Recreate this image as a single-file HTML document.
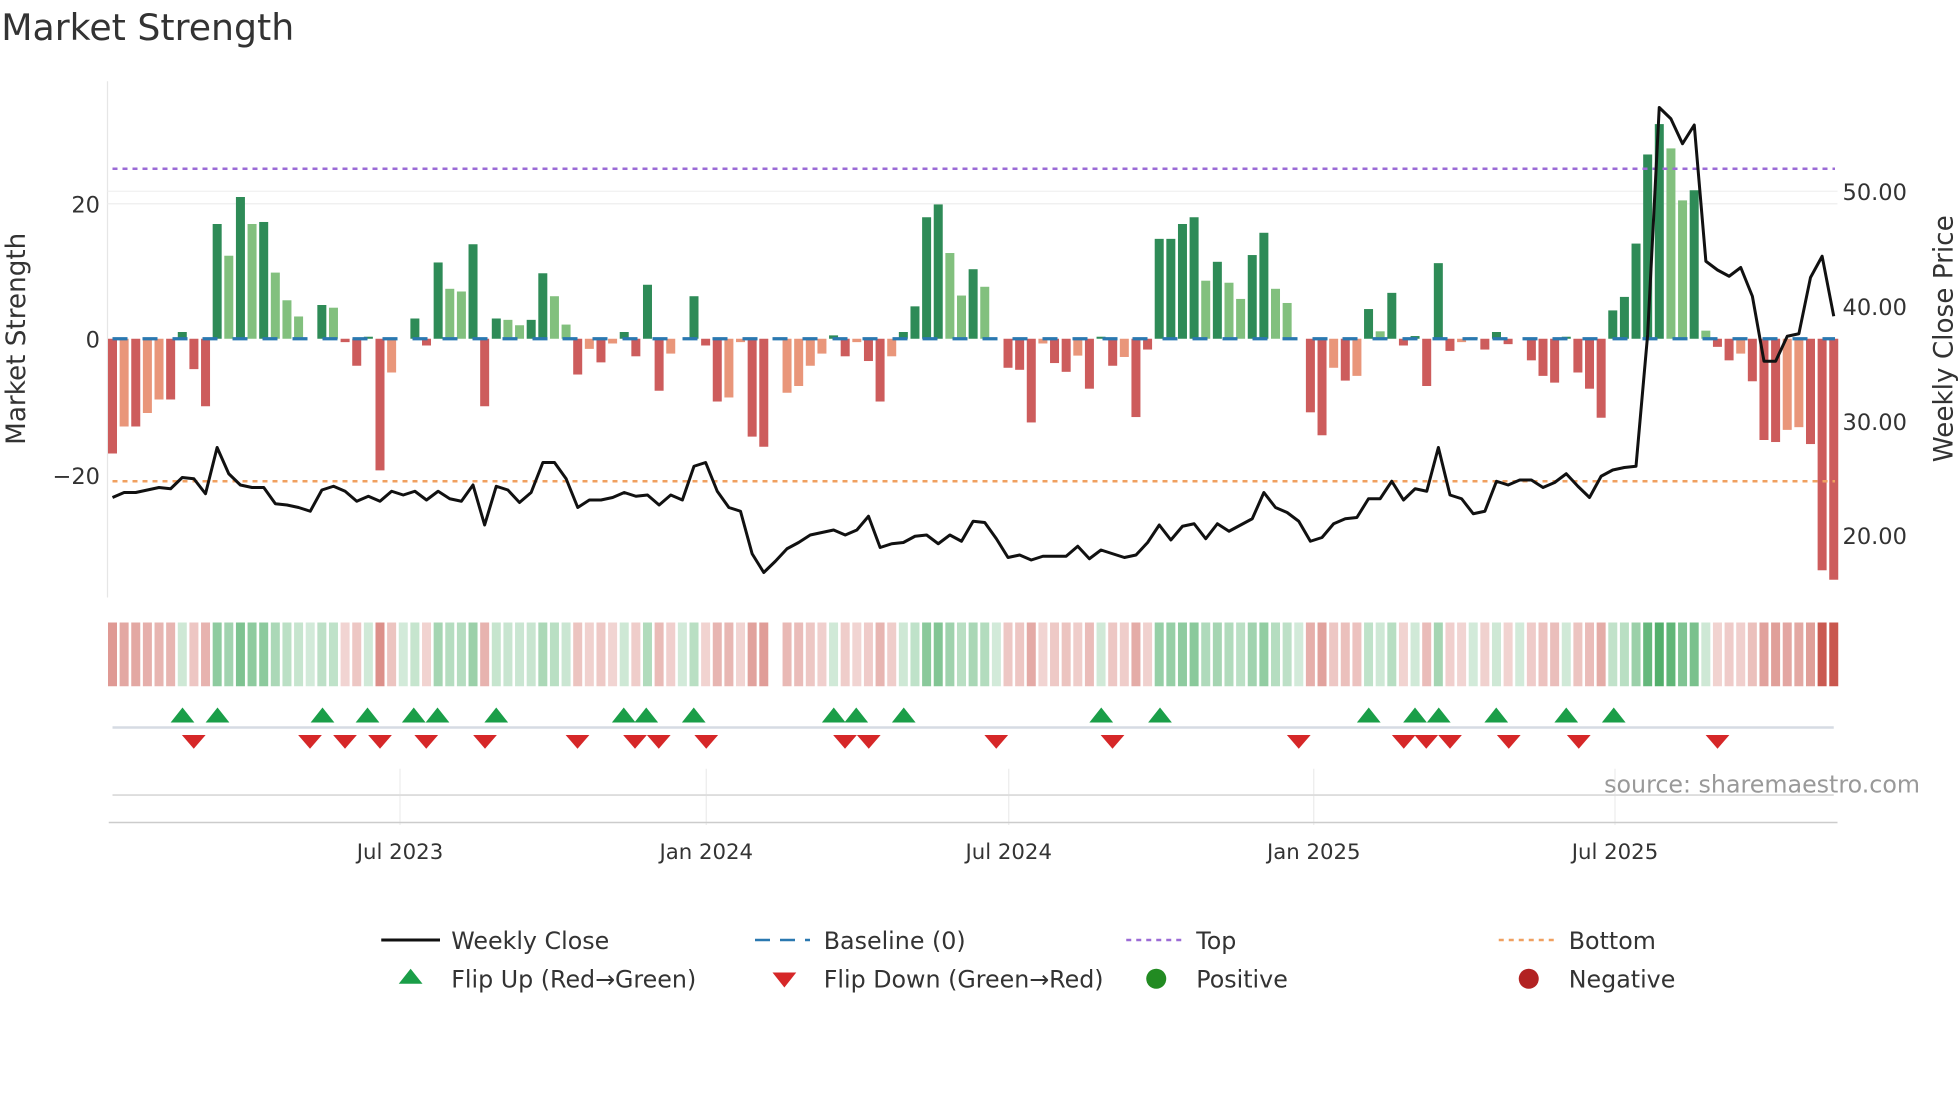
<!DOCTYPE html>
<html><head><meta charset="utf-8"><style>
html,body{margin:0;padding:0;background:#fff;}
svg{display:block;font-family:"DejaVu Sans","Liberation Sans",sans-serif;}
</style></head><body>
<svg id="c" width="1960" height="1102" viewBox="0 0 1568 881.6" xmlns="http://www.w3.org/2000/svg">
<rect width="1568" height="882" fill="#fff"/>
<text x="1" y="32" font-size="29" fill="#333">Market Strength</text>
<line x1="86" y1="65" x2="86" y2="478" stroke="#e6e6e6"/>
<line x1="86" y1="163" x2="1470" y2="163" stroke="#eeeeee"/>
<line x1="86" y1="153" x2="1470" y2="153" stroke="#f0f0f0"/>
<text x="80" y="170" font-size="18" fill="#333" text-anchor="end">20</text>
<text x="80" y="278" font-size="18" fill="#333" text-anchor="end">0</text>
<text x="80" y="387" font-size="18" fill="#333" text-anchor="end">−20</text>
<text x="1474" y="160" font-size="18" fill="#333">50.00</text>
<text x="1474" y="252" font-size="18" fill="#333">40.00</text>
<text x="1474" y="344" font-size="18" fill="#333">30.00</text>
<text x="1474" y="435" font-size="18" fill="#333">20.00</text>
<text transform="translate(20,271) rotate(-90)" font-size="21" fill="#333" text-anchor="middle">Market Strength</text>
<text transform="translate(1562,271) rotate(-90)" font-size="21" fill="#333" text-anchor="middle">Weekly Close Price</text>
<g id="bars"></g>
<line x1="90" y1="135" x2="1468" y2="135" stroke="#9b6bd6" stroke-width="2" stroke-dasharray="4 4"/>
<line x1="90" y1="385" x2="1468" y2="385" stroke="#f0a060" stroke-width="2" stroke-dasharray="4 4"/>
<line x1="90" y1="271" x2="1468" y2="271" stroke="#2a78b0" stroke-width="2.6" stroke-dasharray="12 12"/>
<polyline id="price" fill="none" stroke="#111" stroke-width="2.4" stroke-linejoin="round"/>
<g id="heat"></g>
<g stroke="#ececec">
<line x1="320" y1="615" x2="320" y2="660"/><line x1="565" y1="615" x2="565" y2="660"/><line x1="807" y1="615" x2="807" y2="660"/><line x1="1051" y1="615" x2="1051" y2="660"/><line x1="1292" y1="615" x2="1292" y2="660"/>
</g>
<line x1="90" y1="582" x2="1467" y2="582" stroke="#d6dbe3" stroke-width="2"/>
<line x1="90" y1="636" x2="1467" y2="636" stroke="#dddddd" stroke-width="1.5"/>
<line x1="87" y1="658" x2="1470" y2="658" stroke="#cccccc" stroke-width="1.2"/>
<g id="mk"></g>
<text x="1536" y="634" font-size="19" fill="#999" text-anchor="end">source: sharemaestro.com</text>
<g font-size="17" fill="#333" text-anchor="middle">
<text x="320" y="687">Jul 2023</text><text x="565" y="687">Jan 2024</text><text x="807" y="687">Jul 2024</text><text x="1051" y="687">Jan 2025</text><text x="1292" y="687">Jul 2025</text>
</g>
<g font-size="19" fill="#333">
<line x1="305" y1="752" x2="352" y2="752" stroke="#111" stroke-width="2.4"/>
<text x="361" y="759">Weekly Close</text>
<line x1="604" y1="752" x2="648" y2="752" stroke="#2a78b0" stroke-width="2" stroke-dasharray="12 8"/>
<text x="659" y="759">Baseline (0)</text>
<line x1="901" y1="752" x2="945" y2="752" stroke="#9b6bd6" stroke-width="2" stroke-dasharray="4 4"/>
<text x="957" y="759">Top</text>
<line x1="1199" y1="752" x2="1243" y2="752" stroke="#f0a060" stroke-width="2" stroke-dasharray="4 4"/>
<text x="1255" y="759">Bottom</text>
<polygon points="319,787 338,787 328.5,775" fill="#1a9e48"/>
<text x="361" y="790">Flip Up (Red→Green)</text>
<polygon points="618,778 637,778 627.5,790" fill="#d62728"/>
<text x="659" y="790">Flip Down (Green→Red)</text>
<circle cx="925" cy="783" r="8" fill="#228b22"/>
<text x="957" y="790">Positive</text>
<circle cx="1223" cy="783" r="8" fill="#b22222"/>
<text x="1255" y="790">Negative</text>
</g>
</svg>
<script>
var NS="http://www.w3.org/2000/svg";
var v=[-17,-13,-13,-11,-9,-9,1,-4.5,-10,17,12.3,21,17,17.3,9.8,5.7,3.3,0,5,4.6,-0.5,-4,0.3,-19.5,-5,0,3,-1,11.3,7.4,7,14,-10,3,2.8,2,2.8,9.7,6.3,2.1,-5.3,-1.5,-3.5,-0.7,1,-2.6,8,-7.7,-2.2,0,6.3,-1,-9.3,-8.7,-0.5,-14.5,-16,null,-8,-7,-4,-2.2,0.5,-2.6,-0.5,-3.3,-9.3,-2.6,1,4.8,18,19.9,12.7,6.4,10.3,7.7,0,-4.3,-4.6,-12.4,-0.7,-3.6,-4.9,-2.5,-7.4,0.3,-4,-2.7,-11.6,-1.6,14.8,14.8,17,18,8.6,11.4,8.3,5.9,12.4,15.7,7.4,5.3,0,-10.9,-14.3,-4.3,-6.2,-5.5,4.4,1.1,6.8,-1,0.4,-7,11.2,-1.8,-0.5,0.2,-1.6,1,-0.8,0,-3.2,-5.5,-6.5,0.3,-5,-7.4,-11.7,4.2,6.2,14.1,27.3,31.8,28.2,20.5,22,1.2,-1.2,-3.2,-2.2,-6.3,-15,-15.3,-13.5,-13.1,-15.6,-34.3,-35.7];
var t="RSRSSRDRRDLDLDLLLDDLRRDRSDDRDLLDRDLLDDLLRSRSDRDRSDDRRSSRRXSSSSDRSRRSDDDDLLDLDRRRSRRSRDRSRRDDDDLDLLDDLLDRRSRSDLDRDRDRSDRDRDRRRDRRRDDDDDLLDLRRSRRRSSRRR";
var px=[398,394,394,392,390,391,382,383,395,358,379,388,390,390,403,404,406,409,392,389,393,401,397,401,393,396,393,400,393,399,401,388,420,389,392,402,394,370,370,383,406,400,400,398,394,397,396,404,396,400,373,370,393,406,409,443,458,449,439,434,428,426,424,428,424,413,438,435,434,429,428,435,428,433,417,418,431,446,444,448,445,445,445,437,447,440,443,446,444,434,420,432,421,419,431,419,425,420,415,394,406,410,417,433,430,419,415,414,399,399,385,400,391,393,358,396,399,411,409,385,388,384,384,390,386,379,389,398,381,376,374,373,268,86,95,115,100,209,216,221,214,237,289,289,269,267,222,205,253];
var n=v.length, x0=90, dx=(1467-90)/(n-1);
var col={D:"#2e8b57",L:"#82c07e",R:"#cd5c5c",S:"#e9967a"};
var bars=document.getElementById("bars"),heat=document.getElementById("heat"),pts=[];
for(var i=0;i<n;i++){
 var x=x0+i*dx;
 if(i<px.length)pts.push(x.toFixed(1)+","+px[i]);
 if(v[i]===null)continue;
 var y=271-v[i]*5.4, ty=t[i]||"R";
 if(Math.abs(v[i])>0.05){
  var r=document.createElementNS(NS,"rect");
  r.setAttribute("x",x-3.6);r.setAttribute("width",7.2);
  r.setAttribute("y",Math.min(y,271));r.setAttribute("height",Math.abs(271-y));
  r.setAttribute("fill",col[ty]);bars.appendChild(r);
 }
 var pos=(ty=="D"||ty=="L")||v[i]>0.05;
 var a=0.22+0.7*Math.min(Math.abs(v[i])/36,1);
 var h=document.createElementNS(NS,"rect");
 h.setAttribute("x",x-3.6);h.setAttribute("width",7.2);h.setAttribute("y",498);h.setAttribute("height",51);
 h.setAttribute("fill",pos?"rgb(50,160,80)":"rgb(196,70,60)");h.setAttribute("fill-opacity",a.toFixed(2));
 heat.appendChild(h);
}
document.getElementById("price").setAttribute("points",pts.join(" "));
var up=[146,174,258,294,331,350,397,499,517,555,667,685,723,881,928,1095,1132,1151,1197,1253,1291];
var dn=[155,248,276,304,341,388,462,508,527,565,676,695,797,890,1039,1123,1141,1160,1207,1263,1374];
var mk=document.getElementById("mk");
up.forEach(function(x){var p=document.createElementNS(NS,"polygon");p.setAttribute("points",(x-9.5)+",578 "+(x+9.5)+",578 "+x+",566");p.setAttribute("fill","#1a9e48");mk.appendChild(p);});
dn.forEach(function(x){var p=document.createElementNS(NS,"polygon");p.setAttribute("points",(x-9.5)+",588 "+(x+9.5)+",588 "+x+",599");p.setAttribute("fill","#d62728");mk.appendChild(p);});
</script>
</body></html>
